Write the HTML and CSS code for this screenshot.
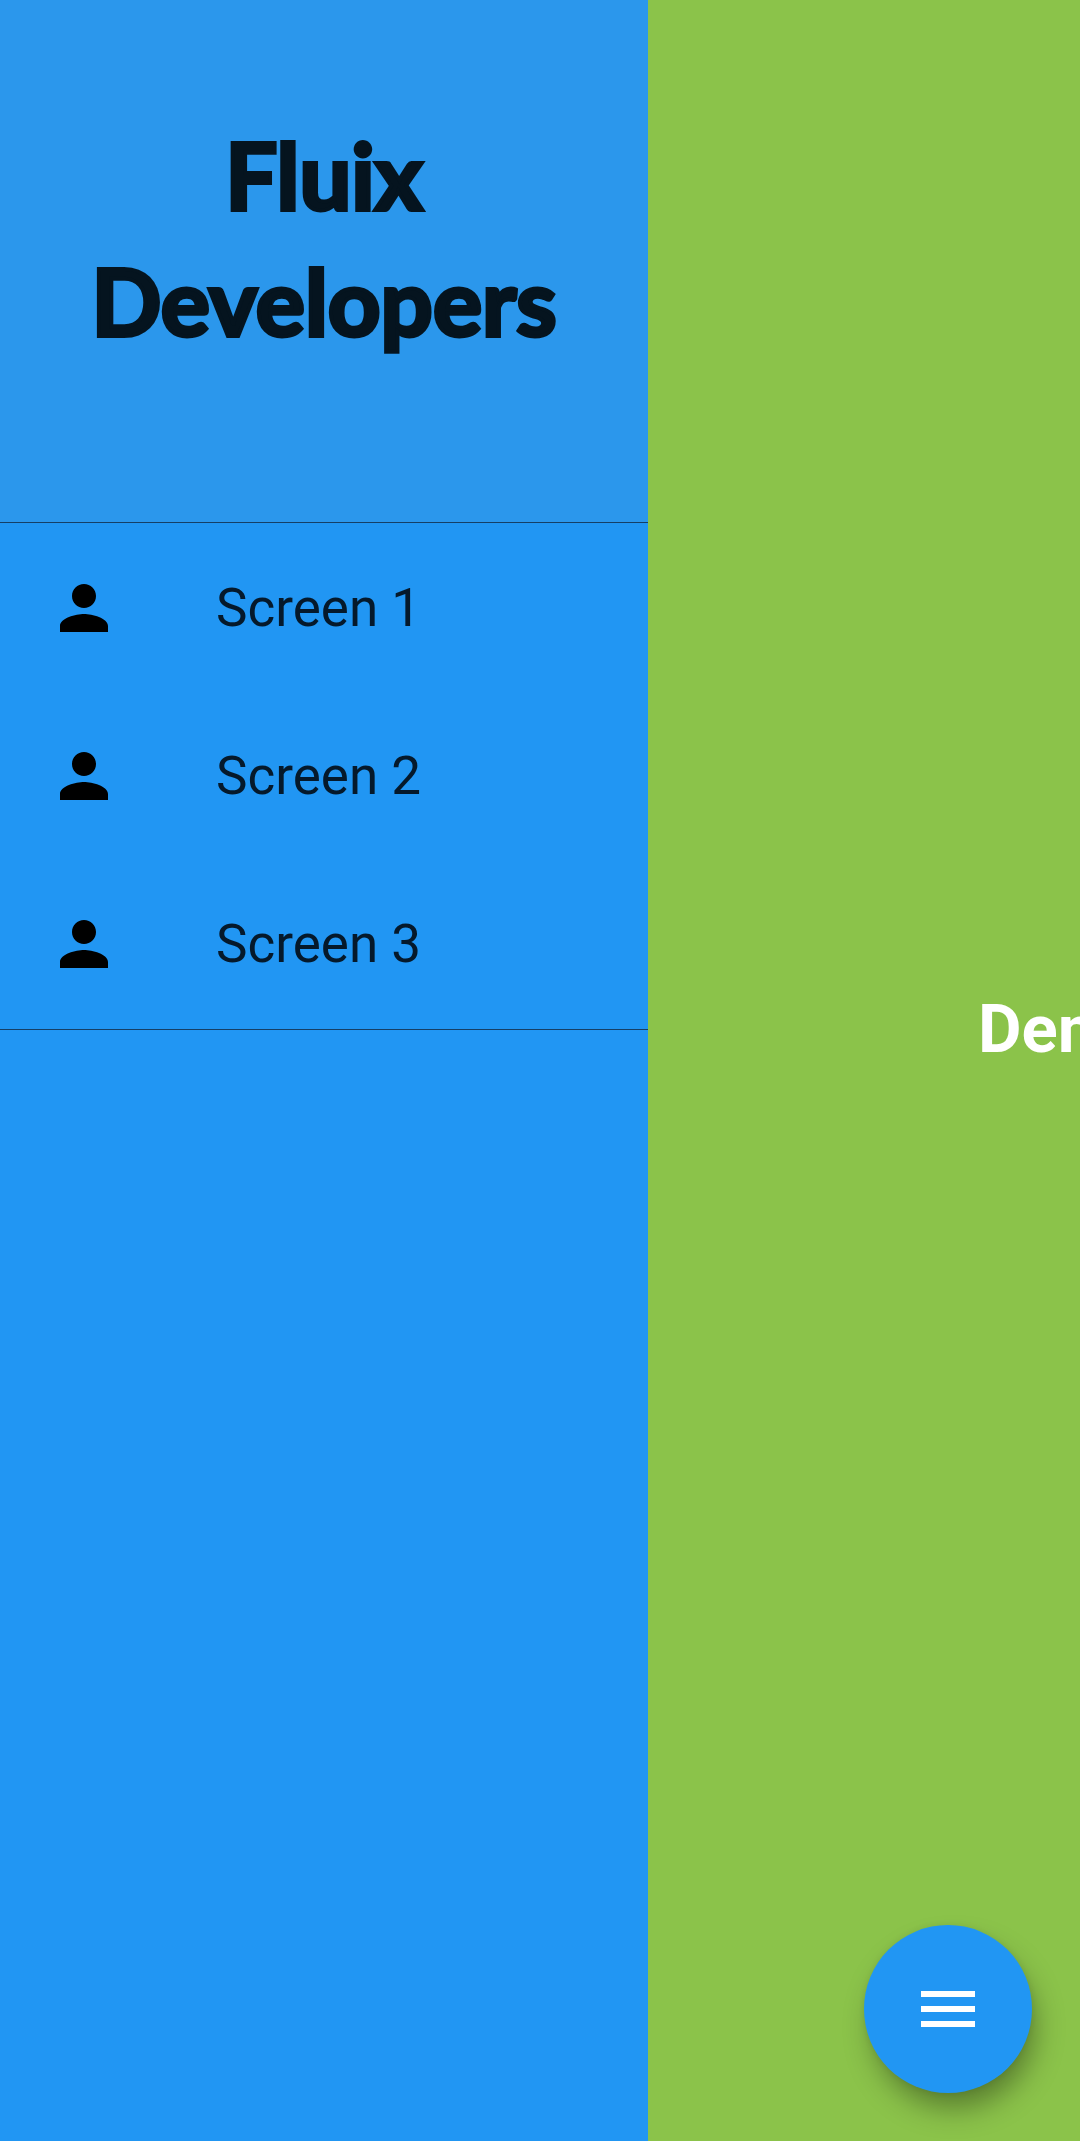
FILE: index.html
```html
<!DOCTYPE html>
<html lang="en">
<head>
  <meta charset="utf-8">
  <meta name="viewport" content="width=device-width, initial-scale=1">
  <title>Fluix Developers</title>
  <link rel="stylesheet" href="styles.css">
</head>
<body>
  <svg class="sprite" aria-hidden="true">
    <symbol id="person" viewBox="0 0 24 24">
      <path d="M12 12c2.21 0 4-1.79 4-4s-1.790-4-4-4-4 1.790-4 4 1.790 4 4 4zm0 2c-2.670 0-8 1.340-8 4v2h16v-2c0-2.660-5.330-4-8-4z"/>
    </symbol>
  </svg>
  <div class="app">
    <aside class="drawer">
      <header class="drawer-header">
        <h1 class="brand">Fluix Developers</h1>
      </header>
      <nav class="menu" aria-label="Screens">
        <a class="menu-item" href="#screen-1"><svg class="icon" aria-hidden="true"><use href="#person"/></svg>Screen 1</a>
        <a class="menu-item" href="#screen-2"><svg class="icon" aria-hidden="true"><use href="#person"/></svg>Screen 2</a>
        <a class="menu-item" href="#screen-3"><svg class="icon" aria-hidden="true"><use href="#person"/></svg>Screen 3</a>
      </nav>
    </aside>
    <main class="screen">
      <p class="screen-title">Demo</p>
    </main>
  </div>
  <button class="fab" type="button" aria-label="Toggle menu">
    <svg class="icon" viewBox="0 0 24 24" aria-hidden="true"><path d="M3 18h18v-2H3v2zm0-5h18v-2H3v2zm0-7v2h18V6H3z"/></svg>
  </button>
</body>
</html>
```

FILE: styles.css
```css
* {
  box-sizing: border-box;
}

body {
  margin: 0;
  font-family: Roboto, "Liberation Sans", sans-serif;
}

.sprite {
  display: none;
}

.app {
  display: grid;
  grid-template-columns: 60% 40%;
  min-height: 100vh;
}

.drawer {
  background: #2196f3;
}

.drawer-header {
  height: 523px;
  padding: 112px 48px 0;
  background: #2b97ec;
  border-bottom: 1px solid #153f66;
}

.brand {
  margin: 0;
  color: #05141f;
  font-family: Lato, sans-serif;
  font-size: 92px;
  font-weight: 700;
  line-height: 126px;
  text-align: center;
  -webkit-text-stroke: 4px #05141f;
}

.menu {
  padding: 1px 0;
  border-bottom: 1px solid #153f66;
}

.menu-item {
  display: flex;
  align-items: center;
  gap: 96px;
  height: 168px;
  padding: 0 48px;
  color: #05192b;
  font-size: 53px;
  line-height: 60px;
  text-decoration: none;
}

.icon {
  flex: none;
  width: 72px;
  height: 72px;
}

.menu .icon {
  fill: #000;
}

.screen {
  display: flex;
  align-items: center;
  overflow: hidden;
  padding: 0 0 84px 330px;
  background: #8bc34a;
}

.screen-title {
  margin: 0;
  color: #fff;
  font-size: 67px;
  font-weight: 700;
}

.fab {
  position: fixed;
  right: 48px;
  bottom: 48px;
  display: grid;
  place-items: center;
  width: 168px;
  height: 168px;
  padding: 0;
  border: 0;
  border-radius: 50%;
  background: #2196f3;
  box-shadow: 6px 18px 30px -4px rgba(0, 0, 0, 0.38), 0 0 8px rgba(0, 0, 0, 0.08);
}

.fab .icon {
  fill: #fff;
}
```
